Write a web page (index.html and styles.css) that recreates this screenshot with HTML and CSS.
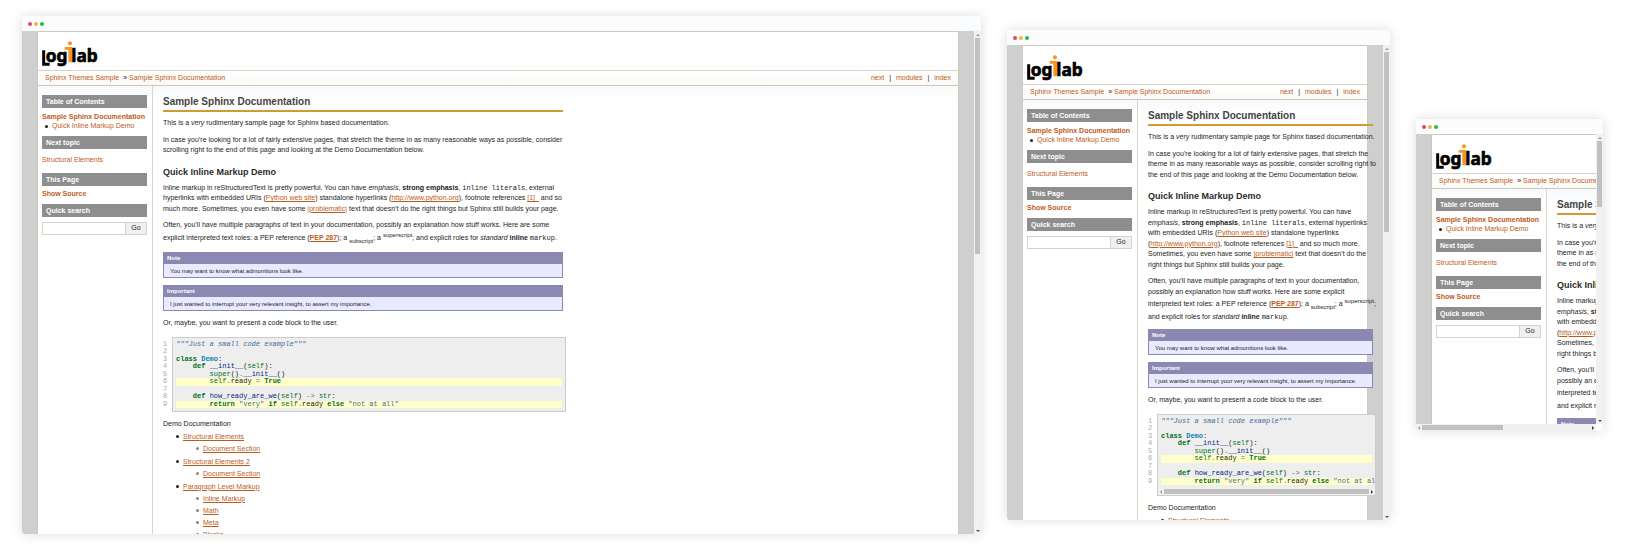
FILE: index.html
```
<!DOCTYPE html>
<html lang="en">
<head>
<meta charset="utf-8">
<title>Sphinx Themes Sample</title>
<link rel="stylesheet" href="styles.css">
</head>
<body>
<svg class="sprite" width="0" height="0" aria-hidden="true">
  <symbol id="logo" viewBox="0 0 168 78">
    <path fill="none" stroke="#000" stroke-width="9" d="M5 28V70H23"/>
    <text x="11" y="64" class="wordmark">og</text>
    <text x="88" y="64" class="wordmark">lab</text>
    <path fill="#f8951d" d="M68 18H90V64H79V26H68Z"/>
    <circle fill="#f8951d" cx="84" cy="7" r="6"/>
  </symbol>
</svg>

<main class="showcase">
  <section class="window window-wide" aria-label="Desktop preview"></section>
  <section class="window window-tablet" aria-label="Tablet preview"></section>
  <section class="window window-phone" aria-label="Phone preview"></section>
</main>

<template id="page">
  <div class="titlebar"><i class="dot red"></i><i class="dot amber"></i><i class="dot green"></i></div>
  <div class="screen">
    <div class="viewport">
      <div class="page">
        <header class="brand"><svg class="logo" role="img" aria-label="Logilab"><use href="#logo"/></svg></header>
        <nav class="related">
          <div class="crumbs"><a href="#">Sphinx Themes Sample</a><span class="sep">»</span><a href="#">Sample Sphinx Documentation</a></div>
          <div class="pager"><a href="#">next</a><span>|</span><a href="#">modules</a><span>|</span><a href="#">index</a></div>
        </nav>
        <div class="columns">
          <aside class="sidebar">
            <h3>Table of Contents</h3>
            <div class="toc"><a class="strong" href="#">Sample Sphinx Documentation</a>
              <ul><li><a href="#">Quick Inline Markup Demo</a></li></ul></div>
            <h3>Next topic</h3>
            <p class="topic"><a href="#">Structural Elements</a></p>
            <h3>This Page</h3>
            <p class="source"><a class="strong" href="#">Show Source</a></p>
            <h3><label class="search-label">Quick search</label></h3>
            <form class="search"><input type="text"><button type="button">Go</button></form>
          </aside>
          <article class="content">
            <h1>Sample Sphinx Documentation</h1>
            <p>This is a <em>very</em> rudimentary sample page for Sphinx based documentation.</p>
            <p>In case you’re looking for a lot of fairly extensive pages, that stretch the theme in as many reasonable ways as possible, consider scrolling right to the end of this page and looking at the Demo Documentation below.</p>
            <h2>Quick Inline Markup Demo</h2>
            <p>Inline markup in reStructuredText is pretty powerful. You can have <em>emphasis</em>, <strong>strong emphasis</strong>, <code>inline literals</code>, external hyperlinks with embedded URIs (<a href="#">Python web site</a>) standalone hyperlinks (<a href="#">http://www.python.org</a>), footnote references <a href="#">[1]_</a> and so much more. Sometimes, you even have some <a href="#">|problematic|</a> text that doesn’t do the right things but Sphinx still builds your page.</p>
            <p>Often, you’ll have multiple paragraphs of text in your documentation, possibly an explanation how stuff works. Here are some explicit interpreted text roles: a PEP reference (<a href="#"><strong>PEP 287</strong></a>); a <sub>subscript</sub>; a <sup>superscript</sup>; and explicit roles for <em>standard</em> <strong>inline</strong> <code>markup</code>.</p>
            <div class="admonition"><p class="title">Note</p><p>You may want to know what admonitions look like.</p></div>
            <div class="admonition"><p class="title">Important</p><p>I just wanted to interrupt your very relevant insight, to assert my importance.</p></div>
            <p>Or, maybe, you want to present a code block to the user.</p>
            <div class="listing">
<pre class="numbers">1
2
3
4
5
6
7
8
9</pre>
<div class="code"><pre><span class="doc">"""Just a small code example"""</span>

<b>class</b> <b class="cls">Demo</b>:
    <b>def</b> <span class="fn">__init__</span>(<span class="kw">self</span>):
        <span class="kw">super</span>()<span class="op">.</span><span class="fn">__init__</span>()
<span class="hll">        <span class="kw">self</span><span class="op">.</span>ready <span class="op">=</span> <b>True</b>
</span>
    <b>def</b> <span class="fn">how_ready_are_we</span>(<span class="kw">self</span>) <span class="op">-&gt;</span> <span class="kw">str</span>:
<span class="hll">        <b>return</b> <span class="str">"very"</span> <b>if</b> <span class="kw">self</span><span class="op">.</span>ready <b>else</b> <span class="str">"not at all"</span>
</span></pre><div class="bar bar-x code-bar"><i class="arrow left"></i><i class="track"><i class="thumb"></i></i><i class="arrow right"></i></div></div>
            </div>
            <p class="caption">Demo Documentation</p>
            <ul class="tree">
              <li><a href="#">Structural Elements</a><ul><li><a href="#">Document Section</a></li></ul></li>
              <li><a href="#">Structural Elements 2</a><ul><li><a href="#">Document Section</a></li></ul></li>
              <li><a href="#">Paragraph Level Markup</a><ul><li><a href="#">Inline Markup</a></li><li><a href="#">Math</a></li><li><a href="#">Meta</a></li><li><a href="#">Blocks</a></li></ul></li>
            </ul>
          </article>
        </div>
      </div>
    </div>
    <div class="bar bar-y"><i class="arrow up"></i><i class="track"><i class="thumb"></i></i><i class="arrow down"></i></div>
  </div>
  <div class="bar bar-x window-bar"><i class="arrow left"></i><i class="track"><i class="thumb"></i></i><i class="arrow right"></i></div>
</template>
<script src="page.js"></script>
</body>
</html>
```

FILE: page.js
```
const template = document.getElementById("page");
document.querySelectorAll(".window").forEach((frame, index) => {
  frame.append(template.content.cloneNode(true));
  frame.querySelector(".search input").id = "search-" + index;
  frame.querySelector(".search-label").htmlFor = "search-" + index;
});
```

FILE: styles.css
```
* { box-sizing: border-box; }
body {
  margin: 0;
  background: #fff;
  color: #1c1c1c;
  font-family: "Liberation Sans", Arial, sans-serif;
  font-size: 7px;
  line-height: 1.5;
}
h1, h2, h3, p, ul, pre { margin: 0; padding: 0; }
a { color: #bd5b1c; text-decoration: none; }
.sprite { display: block; }

.showcase {
  display: grid;
  grid-template-columns: 959fr 383fr 187fr;
  gap: 26px;
  align-items: center;
  min-height: 100vh;
  padding: 0 22px;
}
.window {
  display: flex;
  flex-direction: column;
  min-width: 0;
  overflow: hidden;
  background: #fafcfd;
  border-radius: 3px;
  box-shadow: 0 0 12px rgba(0, 0, 0, 0.14);
}
.window-wide { height: 518px; }
.window-tablet { height: 490px; }
.window-phone { height: 312px; }

.titlebar {
  display: flex;
  flex: none;
  align-items: center;
  gap: 2px;
  height: 15px;
  padding-left: 6px;
}
.dot { width: 4px; height: 4px; border-radius: 50%; }
.red { background: #e8435a; }
.amber { background: #f5b53c; }
.green { background: #2db742; }

.screen { display: flex; flex: 1; min-height: 0; }
.viewport {
  flex: 1;
  min-width: 0;
  overflow: hidden;
  padding: 0 15px;
  background: #cfcfcf;
}
.page {
  min-width: 225px;
  height: 100%;
  background: #fff;
  border: solid #cfc9ba;
  border-width: 1px 1px 0;
}

.bar { display: flex; flex: none; background: #f1f1f1; }
.track { flex: 1; display: flex; }
.thumb { background: #c1c1c1; }
.bar-y { flex-direction: column; width: 7px; padding: 0 1px; }
.bar-y .thumb { width: 100%; height: 44%; }
.bar-x { height: 7px; padding: 1px 0; }
.bar-x .thumb { width: 48%; }
.arrow { flex: none; align-self: center; border: 2px solid transparent; margin: 2px; }
.up { border-top: 0; border-bottom-color: #999; margin: 3px 0 2px; }
.down { border-bottom: 0; border-top-color: #505050; }
.left { border-left: 0; border-right-color: #999; }
.right { border-right: 0; border-left-color: #333; }
.window-bar { display: none; margin-right: 7px; }
.window-tablet .bar-y .thumb { height: 39%; }
.window-phone .bar-y .thumb { height: 24%; }
.window-phone .window-bar { display: flex; }

.brand { height: 39px; padding: 9px 4px 0; border-bottom: 1px solid #d6d2c6; }
.logo { display: block; width: 56px; height: 26px; }
.wordmark { font: bold 52px "Noto Sans", sans-serif; stroke: #000; stroke-width: 2px; }
.related {
  display: flex;
  justify-content: space-between;
  align-items: center;
  height: 15px;
  padding: 0 7px;
  border-bottom: 1px solid #ccc8bc;
  background: linear-gradient(#fff, #fbfaf7);
  white-space: nowrap;
}
.sep { margin: 0 2px 0 4px; }
.pager { display: flex; gap: 5px; }

.columns {
  display: flex;
  background: linear-gradient(#f7fafb, #fff 16px);
}
.sidebar {
  flex: none;
  width: 115px;
  height: 500px;
  padding: 9px 5px 0 4px;
  border-right: 1px solid #d8d5ca;
}
.sidebar h3 {
  height: 13px;
  padding: 0 4px;
  background: #8e8e8e;
  color: #fff;
  font-size: 7px;
  line-height: 13px;
}
.strong { font-weight: bold; }
ul { list-style: none; }
li::before {
  content: "";
  display: inline-block;
  width: 3px;
  height: 3px;
  margin: 0 4px 0 -7px;
  border-radius: 50%;
  background: #222;
  vertical-align: middle;
}
.toc { padding: 4px 0 6px; line-height: 9px; }
.toc ul { padding-left: 10px; }
.topic { padding: 6px 0 7px; }
.source { padding: 3px 0 5px; }
.search { display: flex; height: 13px; margin-top: 5px; }
.search input { flex: 1; min-width: 0; padding: 0 2px; border: 1px solid #d4d2cb; background: #fff; font: inherit; }
.search button {
  width: 22px;
  margin-left: -1px;
  padding: 0;
  border: 1px solid #d4d2cb;
  background: #f0f0f0;
  color: #1c1c1c;
  font: inherit;
}

.content { flex: 1 0 225px; min-width: 225px; max-width: 400px; margin-left: 10px; padding-top: 9px; }
.content h1 {
  padding-bottom: 1px;
  border-bottom: 2px solid #d09a35;
  color: #444;
  font-size: 10px;
  line-height: 14px;
}
.content h2 { margin: 9px 0 4px; color: #2c2c2c; font-size: 9px; line-height: 14px; }
.content > p { margin: 6px -6px 6px 0; }
.content > h2 + p { margin-top: 4px; }
.content a { text-decoration: underline; }
code, pre { font-family: "Liberation Mono", "Courier New", monospace; font-size: 7px; }
sub, sup { font-size: 6px; }

.admonition { margin: 7px 0; border: 1px solid #8c88b4; background: #e9e9ff; font-size: 6px; }
.admonition p { margin: 3px 6px 1px; }
.admonition .title { margin: 0; padding: 0 3px; background: #8c88b4; color: #fff; font-weight: bold; line-height: 11px; }

.listing { display: flex; margin: 8px -3px 8px 0; line-height: 1.07; }
.numbers { width: 9px; padding-top: 4px; color: #aaa; }
.code { flex: 1; min-width: 0; border: 1px solid #ccc; background: #eee; overflow: hidden; padding: 3px 3px 3px 3px; color: #222; }
.code-bar { display: none; }
.hll { display: block; background: #ffc; }
.code b, .kw { color: #007020; }
.kw { font-weight: normal; }
.code .cls { color: #0e84b5; }
.doc { color: #4070a0; font-style: italic; }
.str { color: #4070a0; }
.fn { color: #06287e; }
.op { color: #666; }
.window-tablet .code { padding-bottom: 0; }
.window-tablet .code-bar { display: flex; margin: 3px -3px 0; }
.code-bar .thumb { width: 100%; }

.content .caption { margin: 6px 0 1px; }
.listing + .caption { margin-top: -1px; }
.tree { padding-left: 20px; line-height: 12px; }
.tree ul { padding-left: 20px; margin-bottom: 1px; }
.tree ul li::before { background: #888; }
```
